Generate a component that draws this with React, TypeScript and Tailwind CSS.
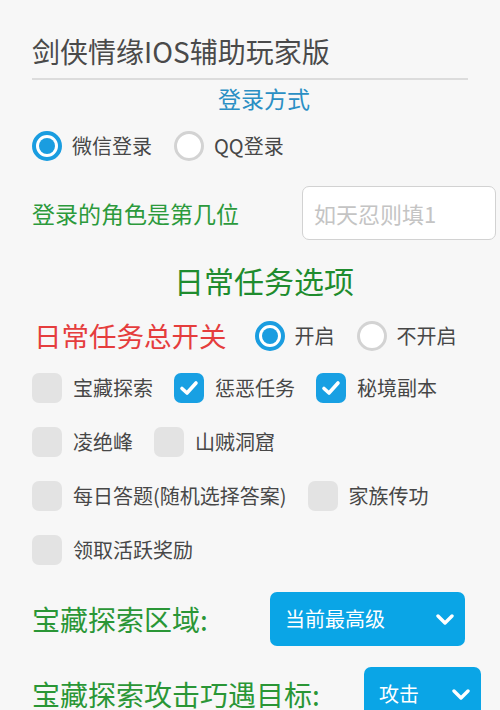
import React from "react";

const FONT = "font-['Noto_Sans_CJK_SC','Noto_Sans',sans-serif]";

function Radio({ checked, label }: { checked: boolean; label: string }) {
  return (
    <div className="flex items-center gap-[10px]">
      {checked ? (
        <span className="flex h-[30px] w-[30px] items-center justify-center rounded-full border-[4px] border-[#1a9de0] bg-white">
          <span className="h-[16px] w-[16px] rounded-full bg-[#1a9de0]" />
        </span>
      ) : (
        <span className="h-[30px] w-[30px] rounded-full border-[3px] border-[#d3d3d3] bg-white" />
      )}
      <span className="text-[20px] leading-none text-[#474747]">{label}</span>
    </div>
  );
}

function Check({ checked, label }: { checked?: boolean; label: string }) {
  return (
    <div className="flex items-center gap-[11px]">
      {checked ? (
        <span className="flex h-[30px] w-[30px] items-center justify-center rounded-[7px] bg-[#18a0e3]">
          <svg width="20" height="16" viewBox="0 0 20 16" fill="none">
            <path d="M3 8.5 L8 13 L17 3" stroke="white" strokeWidth="3.6" strokeLinecap="round" strokeLinejoin="round" />
          </svg>
        </span>
      ) : (
        <span className="h-[30px] w-[30px] rounded-[7px] bg-[#e3e3e3]" />
      )}
      <span className="text-[20px] leading-none text-[#474747]">{label}</span>
    </div>
  );
}

function Chevron() {
  return (
    <svg width="18" height="11" viewBox="0 0 18 11" fill="none">
      <path d="M2 2 L9 9 L16 2" stroke="white" strokeWidth="3.4" strokeLinecap="round" strokeLinejoin="round" />
    </svg>
  );
}

function Select({ value, width }: { value: string; width: string }) {
  return (
    <div className={`flex h-[54px] items-center justify-between rounded-[7px] bg-[#0aa5e6] pl-[15px] pr-[11px] ${width}`}>
      <span className="text-[20px] leading-none text-white">{value}</span>
      <Chevron />
    </div>
  );
}

export default function App() {
  const taskRows = [
    [
      { label: "宝藏探索" },
      { label: "惩恶任务", checked: true },
      { label: "秘境副本", checked: true },
    ],
    [{ label: "凌绝峰" }, { label: "山贼洞窟" }],
    [{ label: "每日答题(随机选择答案)" }, { label: "家族传功" }],
    [{ label: "领取活跃奖励" }],
  ];

  return (
    <div className={`min-h-screen overflow-hidden bg-[#f7f7f7] pl-8 pr-1 pt-[32px] ${FONT}`}>
      {/* Header */}
      <div className="mr-[28px] border-b-[2px] border-[#dcdcdc] pb-[8px]">
        <h1 className="text-[28px] leading-[38px] text-[#4a4a4a]">剑侠情缘IOS辅助玩家版</h1>
      </div>

      <div className="flex h-[36px] items-center justify-center text-[23px] text-[#2a8fc4]">登录方式</div>

      <div className="flex h-[60px] items-center gap-[22px]">
        <Radio checked label="微信登录" />
        <Radio checked={false} label="QQ登录" />
      </div>

      <div className="flex h-[74px] items-center">
        <span className="text-[23px] leading-none text-[#2c9a3c]">登录的角色是第几位</span>
        <input
          placeholder="如天忍则填1"
          className="ml-auto h-[54px] w-[194px] rounded-[7px] border-[1.5px] border-[#d2d2d2] bg-white px-[11px] text-[22px] text-[#444] placeholder:text-[#c4c4c4] outline-none"
        />
      </div>

      {/* Daily tasks */}
      <div className="flex h-[60px] items-center justify-center text-[30px] text-[#1f8c2e]">日常任务选项</div>

      <div className="flex h-[51px] items-center">
        <span className="ml-[2px] mr-[28px] text-[27.5px] leading-none text-[#e53d3d]">日常任务总开关</span>
        <div className="flex items-center gap-[22px]">
          <Radio checked label="开启" />
          <Radio checked={false} label="不开启" />
        </div>
      </div>

      {taskRows.map((row, i) => (
        <div key={i} className="flex h-[54px] items-center gap-[21px]">
          {row.map((item) => (
            <Check key={item.label} label={item.label} checked={item.checked} />
          ))}
        </div>
      ))}

      {/* Treasure options */}
      <div className="flex h-[84px] items-center">
        <span className="w-[238px] text-[28px] leading-none text-[#2a9636]">宝藏探索区域:</span>
        <Select value="当前最高级" width="w-[195px]" />
      </div>

      <div className="flex h-[66px] items-center">
        <span className="w-[332px] text-[28px] leading-none text-[#2a9636]">宝藏探索攻击巧遇目标:</span>
        <Select value="攻击" width="w-[117px]" />
      </div>
    </div>
  );
}
